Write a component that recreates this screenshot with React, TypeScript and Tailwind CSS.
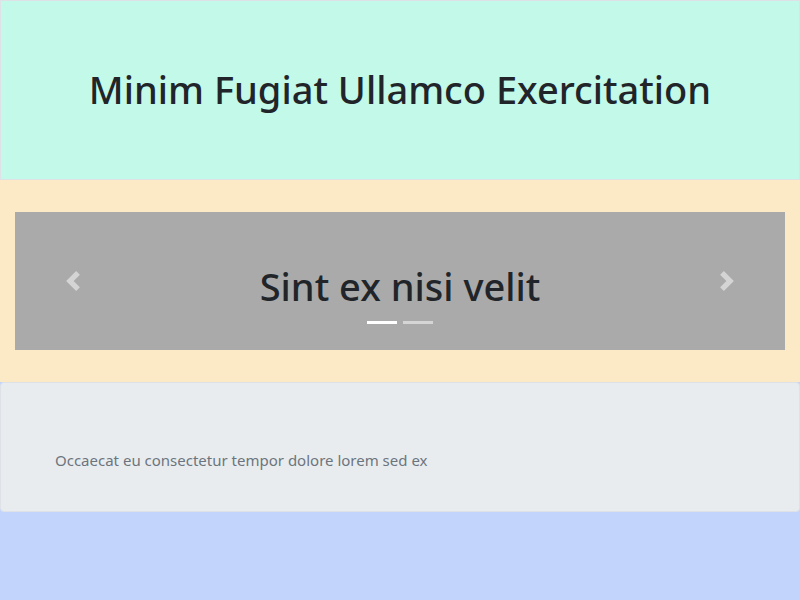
import React from 'react';

const font = { fontFamily: '"Noto Sans", "Open Sans", sans-serif' };

function Chevron({ dir }: { dir: 'prev' | 'next' }) {
  const d =
    dir === 'prev'
      ? 'M5.25 0l-4 4 4 4 1.5-1.5L4.25 4l2.5-2.5L5.25 0z'
      : 'M2.75 0l-1.5 1.5L3.75 4l-2.5 2.5L2.75 8l4-4-4-4z';
  return (
    <svg viewBox="0 0 8 8" className="h-5 w-5 opacity-50" fill="#fff">
      <path d={d} />
    </svg>
  );
}

export default function App() {
  const slides = ['Sint ex nisi velit', 'Dolor aute irure'];

  return (
    <div className="w-[800px] h-[600px] flex flex-col bg-[#c2d4fb]" style={font}>
      <header className="h-[180px] shrink-0 flex items-center justify-center bg-[#c2f9e9] border border-[#dee2e6]">
        <h1 className="text-[38px] font-medium text-[#212529] leading-tight">
          Minim Fugiat Ullamco Exercitation
        </h1>
      </header>

      <section className="shrink-0 bg-[#fce9c5] px-[15px] py-8">
        <div className="relative h-[138px] bg-[#aaaaaa] flex">
          <button className="w-[15%] flex items-center justify-center">
            <Chevron dir="prev" />
          </button>
          <div className="flex-1 flex items-center justify-center pt-[12px]">
            <h2 className="text-[38px] font-medium text-[#212529] leading-tight">{slides[0]}</h2>
          </div>
          <button className="w-[15%] flex items-center justify-center">
            <Chevron dir="next" />
          </button>
          <ol className="absolute left-0 right-0 bottom-[26px] flex justify-center gap-[6px]">
            {slides.map((s, i) => (
              <li key={s} className={`w-[30px] h-[3px] bg-white ${i === 0 ? '' : 'opacity-50'}`} />
            ))}
          </ol>
        </div>
      </section>

      <section className="shrink-0 h-[130px] bg-[#e9ecef] border border-[#dee2e6] rounded-[4px] pl-[54px] pt-[65px]">
        <p className="text-[15px] leading-6 text-[#6c757d]">
          Occaecat eu consectetur tempor dolore lorem sed ex
        </p>
      </section>

      <div className="flex-1" />
    </div>
  );
}
